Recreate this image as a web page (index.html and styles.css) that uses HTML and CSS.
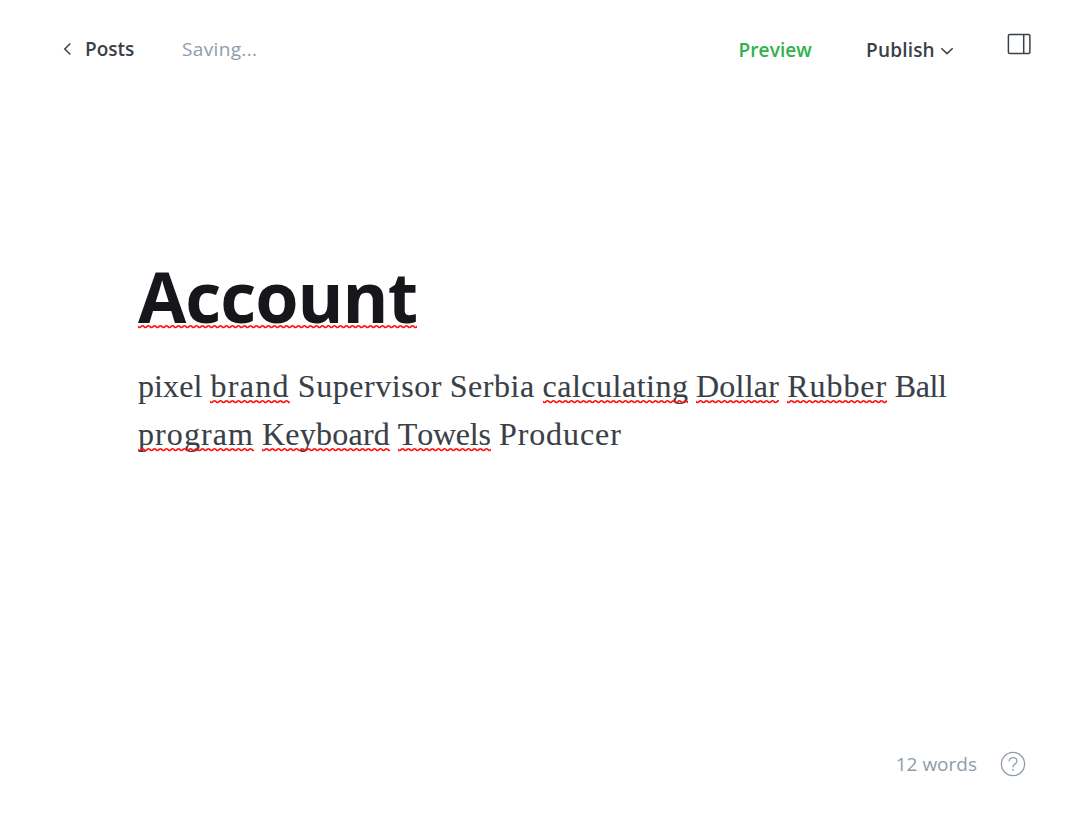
FILE: index.html
```html
<!DOCTYPE html>
<html lang="en">
<head>
<meta charset="utf-8">
<title>Account</title>
<link rel="stylesheet" href="styles.css">
</head>
<body>
<div class="editor">
  <header class="topbar">
    <a class="back">
      <svg class="chevron-left" width="8" height="14" viewBox="0 0 8 14"><path d="M7.3 1.5 1.8 7l5.5 5.5"/></svg>
      <span class="posts">Posts</span>
    </a>
    <span class="status">Saving...</span>
    <nav class="actions">
      <span class="preview">Preview</span>
      <span class="publish">Publish</span>
      <svg class="chevron-down" width="14" height="8" viewBox="0 0 14 8"><path d="M1.3 1.2 7 6.6l5.7-5.4"/></svg>
      <svg class="sidebar-icon" width="24" height="22" viewBox="0 0 24 22"><rect x="1.4" y="1.4" width="21.5" height="19.2" rx="1.3"/><path d="M16.7 1.4v19.2"/></svg>
    </nav>
  </header>
  <main class="content">
    <h1 class="title"><span class="misspelled title-word">Account</span></h1>
    <div class="body">
      <p class="line"><span class="w-pixel">pixel</span> <span class="misspelled w-brand">brand</span> <span class="w-supervisor">Supervisor</span> <span class="w-serbia">Serbia</span> <span class="misspelled w-calculating">calculating</span> <span class="misspelled w-dollar">Dollar</span> <span class="misspelled w-rubber">Rubber</span> <span class="w-ball">Ball</span></p>
      <p class="line"><span class="misspelled w-program">program</span> <span class="misspelled w-keyboard">Keyboard</span> <span class="misspelled w-towels">Towels</span> <span class="w-producer">Producer</span></p>
    </div>
  </main>
  <footer class="footer">
    <span class="count">12 words</span>
    <svg class="help" width="26" height="26" viewBox="0 0 26 26"><circle cx="13" cy="13" r="11.6"/><path d="M9.1 10.3c0-2.2 1.7-3.6 3.9-3.6s3.9 1.5 3.9 3.5c0 2.8-3.9 3-3.9 5.5v.6"/><circle class="dot" cx="13" cy="18.9" r=".9"/></svg>
  </footer>
</div>
</body>
</html>
```
FILE: styles.css
```css
* { box-sizing: border-box; }
body {
  margin: 0;
  background: #fff;
  color: #394047;
  font-family: "Open Sans", "Noto Sans", sans-serif;
}
.editor { height: 834px; display: flex; flex-direction: column; overflow: hidden; }
svg { fill: none; stroke: #394047; stroke-width: 1.5; flex: none; }

.topbar {
  display: flex;
  align-items: flex-start;
  height: 100px;
  padding: 35px 57px 0 63px;
  font-size: 19px;
  line-height: 28px;
  white-space: nowrap;
}
.back { display: flex; width: 119px; }
.chevron-left { margin: 7px 14px 0 0; }
.posts, .preview, .publish { font-weight: 600; letter-spacing: 0.1px; }
.posts { letter-spacing: 0; }
.status { color: #8e9cac; letter-spacing: 0.35px; }
.actions { display: flex; margin-left: auto; padding-top: 1px; }
.preview { width: 127.5px; color: #30b24a; }
.publish { width: 74px; letter-spacing: 0.2px; }
.chevron-down { margin: 11px 53px 0 0; }
.sidebar-icon { margin-top: -3px; }

.content { flex: 1; padding: 148px 138px 0; }
.title {
  margin: 0;
  height: 114px;
  font-size: 70px;
  line-height: 96px;
  font-weight: 700;
  color: #15171a;
}
.title-word { letter-spacing: -1px; }
.body {
  font-family: "Liberation Serif", serif;
  font-size: 32px;
  font-kerning: none;
  -webkit-text-stroke: 0.1px #394047;
}
.line {
  display: flex;
  gap: 7.9px;
  height: 48px;
  margin: 0;
  line-height: 48px;
  white-space: nowrap;
}
.misspelled { position: relative; display: inline-block; }
.misspelled::after {
  content: "";
  position: absolute;
  left: 0;
  right: 0;
  top: 38px;
  height: 4px;
  background: url("data:image/svg+xml,%3Csvg xmlns='http://www.w3.org/2000/svg' width='6' height='4'%3E%3Cpath d='M-1.5 .8C0 .8 0 2.5 1.5 2.5S3 .8 4.5 .8 6 2.5 7.5 2.5' fill='none' stroke='%23ff1010' stroke-width='1.6'/%3E%3C/svg%3E") repeat-x;
}
.title-word::after { top: 77px; }
.w-pixel { width: 64.5px; letter-spacing: 0.1px; }
.w-brand { width: 79.5px; letter-spacing: 1.3px; }
.w-supervisor { width: 144px; letter-spacing: 0.55px; }
.w-serbia { width: 85px; letter-spacing: 0.55px; }
.w-calculating { width: 145.5px; letter-spacing: 0.5px; }
.w-dollar { width: 83.5px; letter-spacing: 0.25px; }
.w-rubber { width: 99.5px; letter-spacing: 0.9px; }
.w-ball { letter-spacing: -0.4px; }
.w-program { width: 116px; letter-spacing: 1.08px; }
.w-keyboard { width: 128px; letter-spacing: 0.25px; }
.w-towels { width: 93.3px; letter-spacing: -0.2px; }
.w-producer { letter-spacing: 0.9px; }

.footer {
  display: flex;
  align-items: center;
  justify-content: flex-end;
  gap: 23px;
  height: 26px;
  margin: 0 62px 57px 0;
  font-size: 19px;
  color: #8e9cac;
}
.help { stroke: #8e9cac; stroke-width: 1.3; }
.dot { fill: #8e9cac; stroke: none; }
```
